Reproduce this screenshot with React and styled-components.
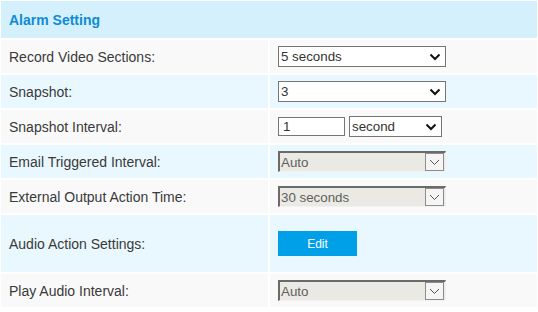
import React from 'react';
import styled, { createGlobalStyle } from 'styled-components';

const GlobalStyle = createGlobalStyle`
  html, body {
    margin: 0;
    padding: 0;
    background: #ffffff;
  }
  body {
    font-family: Arial, "Liberation Sans", sans-serif;
  }
`;

const chevron =
  "data:image/svg+xml,%3Csvg xmlns='http://www.w3.org/2000/svg' width='12' height='8' viewBox='0 0 12 8'%3E%3Cpolyline points='1.5,1.5 6,6 10.5,1.5' fill='none' stroke='%23111' stroke-width='2'/%3E%3C/svg%3E";

const Panel = styled.div`
  width: 538px;
  padding: 1px;
  box-sizing: border-box;
  display: flex;
  flex-direction: column;
  gap: 2px;
`;

const Header = styled.div`
  height: 37px;
  background: #d4f0fc;
  display: flex;
  align-items: center;
  padding-left: 8px;
  font-size: 14px;
  font-weight: bold;
  color: #0f8bd3;
`;

const Row = styled.div`
  display: flex;
  gap: 2px;
  height: ${(props) => props.height || 33}px;
`;

const Cell = styled.div`
  background: ${(props) => (props.alt ? '#e9f8fe' : '#f9f9f9')};
  display: flex;
  align-items: center;
  gap: 4px;
  box-sizing: border-box;
`;

const Label = styled(Cell)`
  width: 267px;
  padding-left: 8px;
  font-size: 14px;
  color: #3a3a3a;
`;

const Field = styled(Cell)`
  flex: 1;
  padding-left: 8px;
`;

const Select = styled.select`
  appearance: none;
  -webkit-appearance: none;
  width: ${(props) => props.width}px;
  height: 21px;
  box-sizing: border-box;
  font-family: Arial, "Liberation Sans", sans-serif;
  font-size: 13.33px;
  color: #333333;
  background: #ffffff url("${chevron}") no-repeat right 4px center;
  border: 1px solid #767676;
  border-radius: 0;
  padding: 0 0 0 2px;
  margin: 0;
`;

const TextInput = styled.input`
  width: 67px;
  height: 19px;
  box-sizing: border-box;
  font-family: Arial, "Liberation Sans", sans-serif;
  font-size: 13.33px;
  color: #333333;
  border: 1px solid #767676;
  padding: 0 4px;
  margin: 0;
`;

const DisabledBox = styled.div`
  width: 168px;
  height: 21px;
  box-sizing: border-box;
  background: #ebe9e3;
  border-top: 2px solid #6a6a6a;
  border-left: 2px solid #6a6a6a;
  border-right: 1px solid #f2f2f2;
  border-bottom: 1px solid #f2f2f2;
  display: flex;
  align-items: center;
  justify-content: space-between;
  font-size: 13.33px;
  color: #5f5f5f;
  padding-left: 1px;
`;

const ArrowBox = styled.div`
  width: 17px;
  height: 16px;
  margin-right: 1px;
  border: 1px solid #8c8c8c;
  background: #f5f5f5;
  display: flex;
  align-items: center;
  justify-content: center;
`;

const EditButton = styled.button`
  width: 79px;
  height: 25px;
  border: none;
  background: #00a0e9;
  color: #ffffff;
  font-family: Arial, "Liberation Sans", sans-serif;
  font-size: 12px;
  padding: 0;
  margin: 0;
  cursor: pointer;
`;

const DisabledSelect = ({ value }) => (
  <DisabledBox>
    <span>{value}</span>
    <ArrowBox>
      <svg width="11" height="7" viewBox="0 0 11 7">
        <polyline points="1,1 5.5,5.5 10,1" fill="none" stroke="#555" strokeWidth="1" />
      </svg>
    </ArrowBox>
  </DisabledBox>
);

export default function App() {
  return (
    <>
      <GlobalStyle />
      <Panel>
        <Header>Alarm Setting</Header>
        <Row>
          <Label>Record Video Sections:</Label>
          <Field>
            <Select width={168} defaultValue="5">
              <option value="5">5 seconds</option>
              <option value="10">10 seconds</option>
            </Select>
          </Field>
        </Row>
        <Row>
          <Label alt>Snapshot:</Label>
          <Field alt>
            <Select width={168} defaultValue="3">
              <option value="1">1</option>
              <option value="3">3</option>
            </Select>
          </Field>
        </Row>
        <Row>
          <Label>Snapshot Interval:</Label>
          <Field>
            <TextInput defaultValue="1" />
            <Select width={93} defaultValue="second">
              <option value="second">second</option>
              <option value="minute">minute</option>
            </Select>
          </Field>
        </Row>
        <Row>
          <Label alt>Email Triggered Interval:</Label>
          <Field alt>
            <DisabledSelect value="Auto" />
          </Field>
        </Row>
        <Row>
          <Label>External Output Action Time:</Label>
          <Field>
            <DisabledSelect value="30 seconds" />
          </Field>
        </Row>
        <Row height={57}>
          <Label alt>Audio Action Settings:</Label>
          <Field alt>
            <EditButton>Edit</EditButton>
          </Field>
        </Row>
        <Row>
          <Label>Play Audio Interval:</Label>
          <Field>
            <DisabledSelect value="Auto" />
          </Field>
        </Row>
      </Panel>
    </>
  );
}
